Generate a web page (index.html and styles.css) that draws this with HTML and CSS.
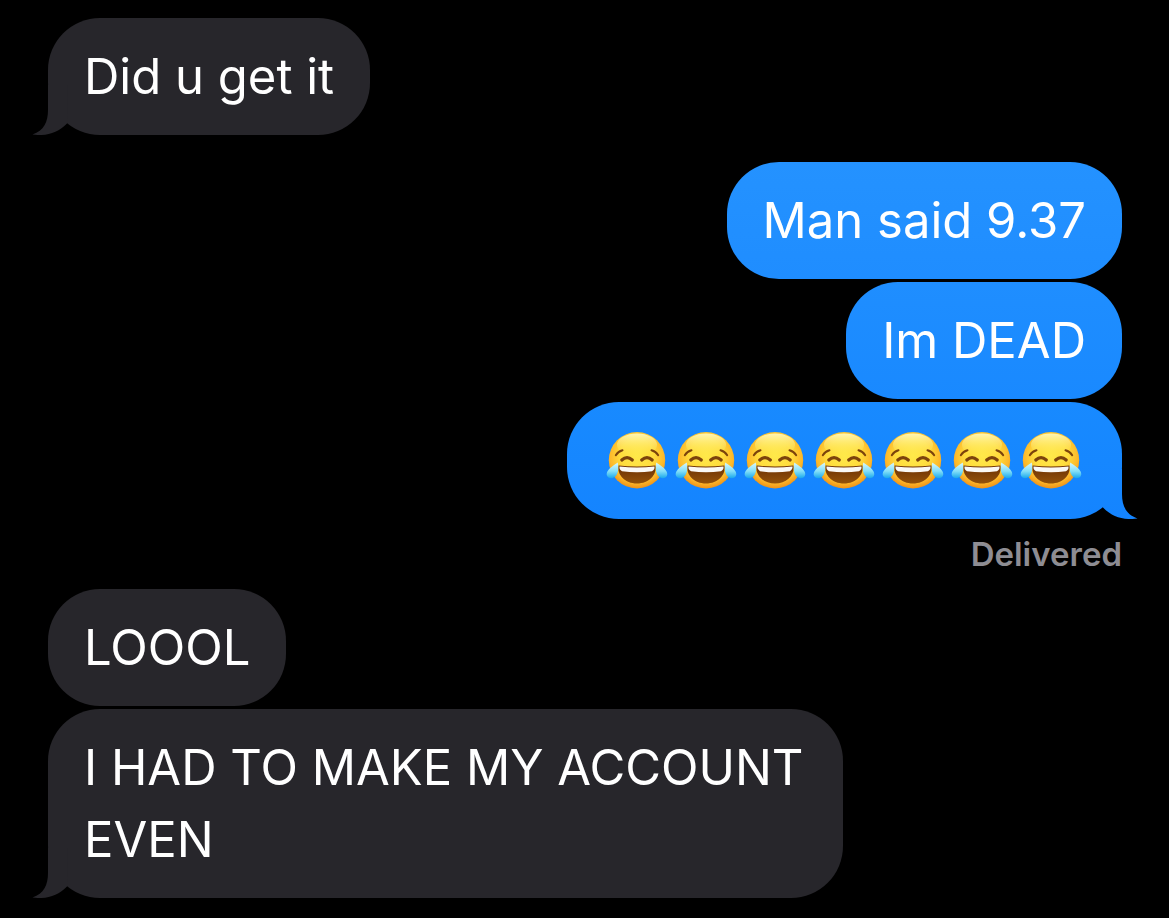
FILE: index.html
```html
<!DOCTYPE html>
<html lang="en">
<head>
<meta charset="utf-8">
<meta name="viewport" content="width=device-width, initial-scale=1">
<title>Messages</title>
<link rel="stylesheet" href="styles.css">
</head>
<body>
<svg class="defs" aria-hidden="true">
  <defs>
    <linearGradient id="tail-blue" gradientUnits="userSpaceOnUse" x1="0" y1="-67" x2="0" y2="50">
      <stop offset="0" stop-color="#188aff"/><stop offset="1" stop-color="#1484ff"/>
    </linearGradient>
    <radialGradient id="face" cx=".5" cy=".42" r=".6">
      <stop offset="0" stop-color="#ffe94a"/><stop offset=".5" stop-color="#ffdc3c"/><stop offset=".8" stop-color="#fdb82a"/><stop offset="1" stop-color="#ec8a14"/>
    </radialGradient>
    <linearGradient id="shine" x1="0" y1="0" x2="0" y2="1">
      <stop offset="0" stop-color="#fffbc4" stop-opacity=".9"/><stop offset="1" stop-color="#ffe94a" stop-opacity="0"/>
    </linearGradient>
    <linearGradient id="mouth" x1="0" y1="0" x2="0" y2="1">
      <stop offset="0" stop-color="#6b3004"/><stop offset="1" stop-color="#94520a"/>
    </linearGradient>
    <linearGradient id="tear" x1="0" y1="0" x2="0" y2="1">
      <stop offset="0" stop-color="#d8f8ff"/><stop offset=".55" stop-color="#84dff8"/><stop offset="1" stop-color="#18a8ec"/>
    </linearGradient>
    <symbol id="joy" viewBox="0 0 69 60">
      <circle cx="34" cy="29.200" r="28.200" fill="url(#face)"/>
      <ellipse cx="34" cy="14" rx="20" ry="11.500" fill="url(#shine)"/>
      <g fill="none" stroke="#7c430c" stroke-linecap="round">
        <path d="M12.800 24.200Q15 20.500 19.500 19.200" stroke-width="2"/>
        <path d="M55.200 24.200Q53 20.500 48.500 19.200" stroke-width="2"/>
        <path d="M18.800 29Q24 24.300 29.300 29" stroke-width="3.200"/>
        <path d="M49.200 29Q44 24.300 38.700 29" stroke-width="3.200"/>
      </g>
      <path d="M15.500 34.500Q34 36.500 52.500 34.500C54 44 46 52.500 34 52.500C22 52.500 14 44 15.500 34.500Z" fill="url(#mouth)"/>
      <path d="M16.500 35.500Q34 37.300 51.500 35.500Q52 38.500 49 40.200Q34 42.500 19 40.200Q16 38.500 16.500 35.500Z" fill="#faf8f5"/>
      <path id="drop" d="M14.800 31.500C15.600 37 15.400 41 13.800 43.500C11.500 47.800 6.500 48.300 4.500 45.600C2.700 42.800 4.200 39.800 7.200 37Q11.500 33.500 14.800 31.500Z" fill="url(#tear)"/>
      <use href="#drop" transform="matrix(-1 0 0 1 68 0)"/>
    </symbol>
    <symbol id="tail" viewBox="0 0 36 50">
      <path d="M16 0V25C16 37 12 45.500 .5 49.500C14 51.500 26 48 35 38.500L36 0Z"/>
    </symbol>
  </defs>
</svg>
<main class="thread">
  <section class="group received">
    <p class="bubble">Did u get it<svg class="tail" aria-hidden="true"><use href="#tail"/></svg></p>
  </section>
  <section class="group sent">
    <p class="bubble shade-1">Man said 9.37</p>
    <p class="bubble shade-2">Im DEAD</p>
    <p class="bubble shade-3">
      <span class="emoji-row" role="img" aria-label="Seven faces with tears of joy">
        <svg class="emoji"><use href="#joy"/></svg><svg class="emoji"><use href="#joy"/></svg><svg class="emoji"><use href="#joy"/></svg><svg class="emoji"><use href="#joy"/></svg><svg class="emoji"><use href="#joy"/></svg><svg class="emoji"><use href="#joy"/></svg><svg class="emoji"><use href="#joy"/></svg>
      </span>
      <svg class="tail" aria-hidden="true"><use href="#tail"/></svg>
    </p>
    <p class="status">Delivered</p>
  </section>
  <section class="group received">
    <p class="bubble">LOOOL</p>
    <p class="bubble">I HAD TO MAKE MY ACCOUNT EVEN<svg class="tail" aria-hidden="true"><use href="#tail"/></svg></p>
  </section>
</main>
</body>
</html>
```
FILE: styles.css
```css
* { box-sizing: border-box; }
body {
  margin: 0;
  background: #000;
  color: #fff;
  font-family: Inter, "Liberation Sans", sans-serif;
}
.defs { position: absolute; width: 0; height: 0; }
.thread {
  display: flex;
  flex-direction: column;
  padding: 18px 47px 18px 48px;
}
.group {
  display: flex;
  flex-direction: column;
  gap: 3px;
}
.received { align-items: flex-start; }
.sent { align-items: flex-end; margin-top: 27px; }
.bubble {
  position: relative;
  margin: 0;
  max-width: 74%;
  padding: 23px 36px 22px;
  border-radius: 52px;
  font-size: 49px;
  line-height: 72px;
}
.received .bubble { background: #27262b; }
.shade-1 { background: linear-gradient(#2492ff, #1f8dff); }
.shade-2 { background: linear-gradient(#1f8eff, #1989ff); }
.shade-3 { background: linear-gradient(#188aff, #1484ff); }
.tail {
  position: absolute;
  bottom: 0;
  left: -16px;
  width: 36px;
  height: 50px;
  fill: #27262b;
}
.sent .tail {
  left: auto;
  right: -16px;
  transform: scaleX(-1);
  fill: url(#tail-blue);
}
.emoji-row {
  display: flex;
  align-items: center;
  height: 72px;
}
.emoji { width: 69px; height: 60px; }
.status {
  margin: 13px 0 16px;
  color: #8e8d93;
  font-size: 33px;
  font-weight: 600;
  line-height: 38px;
}
```
